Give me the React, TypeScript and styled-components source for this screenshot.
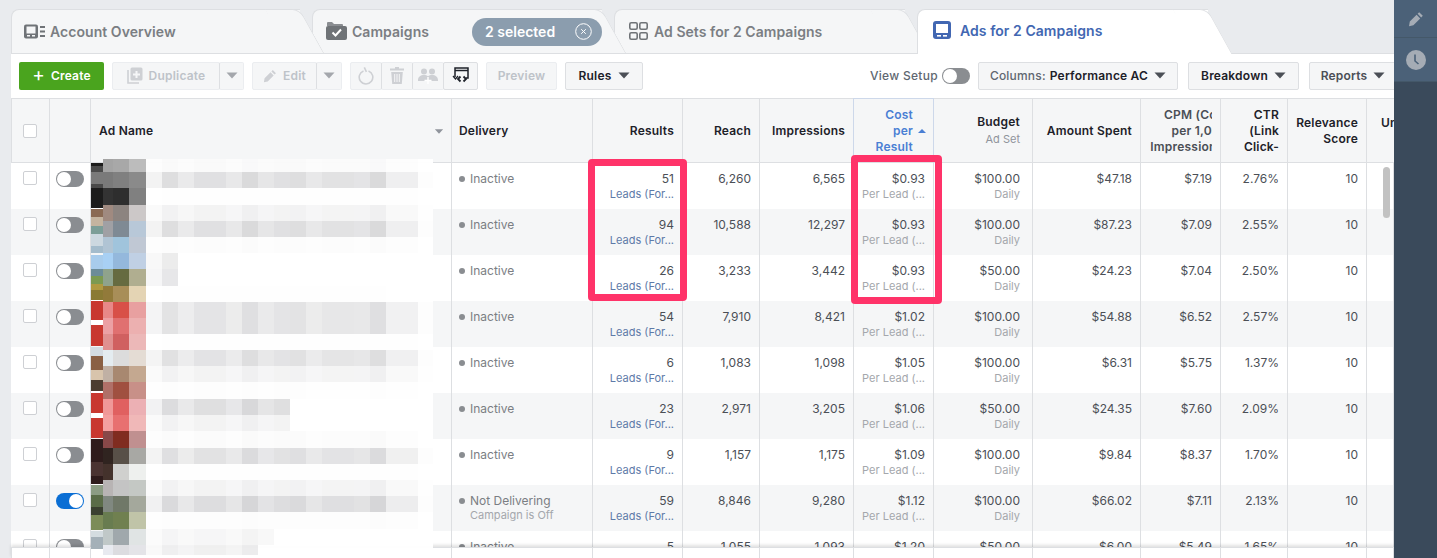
import React from "react";
import styled, { createGlobalStyle } from "styled-components";

const Global = createGlobalStyle`
  html, body { margin: 0; padding: 0; height: 558px; overflow: hidden; }
  body { font-family: Inter, "Liberation Sans", sans-serif; background: #e9ebee; }
  * { box-sizing: border-box; }
`;

const COLS = [39, 41, 361, 141, 90, 77, 94, 80, 99, 108, 80, 67, 79, 27];
const TEMPLATE = COLS.map((c) => `${c}px`).join(" ");

interface IAd {
  results: string;
  reach: string;
  impressions: string;
  cost: string;
  budget: string;
  spent: string;
  cpm: string;
  ctr: string;
  status?: string;
  on?: boolean;
}

const ADS: IAd[] = [
  { results: "51", reach: "6,260", impressions: "6,565", cost: "$0.93", budget: "$100.00", spent: "$47.18", cpm: "$7.19", ctr: "2.76%" },
  { results: "94", reach: "10,588", impressions: "12,297", cost: "$0.93", budget: "$100.00", spent: "$87.23", cpm: "$7.09", ctr: "2.55%" },
  { results: "26", reach: "3,233", impressions: "3,442", cost: "$0.93", budget: "$50.00", spent: "$24.23", cpm: "$7.04", ctr: "2.50%" },
  { results: "54", reach: "7,910", impressions: "8,421", cost: "$1.02", budget: "$100.00", spent: "$54.88", cpm: "$6.52", ctr: "2.57%" },
  { results: "6", reach: "1,083", impressions: "1,098", cost: "$1.05", budget: "$100.00", spent: "$6.31", cpm: "$5.75", ctr: "1.37%" },
  { results: "23", reach: "2,971", impressions: "3,205", cost: "$1.06", budget: "$50.00", spent: "$24.35", cpm: "$7.60", ctr: "2.09%" },
  { results: "9", reach: "1,157", impressions: "1,175", cost: "$1.09", budget: "$100.00", spent: "$9.84", cpm: "$8.37", ctr: "1.70%" },
  { results: "59", reach: "8,846", impressions: "9,280", cost: "$1.12", budget: "$100.00", spent: "$66.02", cpm: "$7.11", ctr: "2.13%", status: "Campaign is Off", on: true },
  { results: "5", reach: "1,055", impressions: "1,093", cost: "$1.20", budget: "$50.00", spent: "$6.00", cpm: "$5.49", ctr: "1.65%" },
];

// the blurred thumbnails and ad names, in page pixels measured from x=91 / y=159
const BLUR = [0.06, 0.16, 0.1, 0.15, 0.15, 0.11, 0.18, 0.12, 0.15, 0.16, 0.11, 0.14, 0.14, 0.13, 0.18, 0.08, 0.08, 0.01];
const MOSAIC: [number, number, string, string, string, number, number][] = [
  [159, 13, "#a4a4a4", "#a8a8a8", "#bcbcbc", 0.15, 18],
  [172, 16, "#7a7a7a", "#808080", "#8a8a8a", 1, 18],
  [188, 17, "#333333", "#2e2e2e", "#808080", 0.03, 18],
  [205, 16, "#a08a80", "#8c8480", "#ccc8c8", 0.4, 18],
  [221, 16, "#a0a0a4", "#7f8a94", "#b8c8d8", 1, 18],
  [237, 16, "#b0c4d4", "#a0c4dc", "#c0c8d4", 0.1, 18],
  [253, 16, "#a8d0f4", "#94b8dc", "#c0d0e4", 0.6, 2],
  [269, 17, "#8fa38c", "#666b40", "#b0ae90", 0.7, 2],
  [286, 16, "#927a3a", "#a88e58", "#e4d4b4", 0.02, 18],
  [302, 16, "#e88888", "#d85048", "#e8a0a0", 0.85, 18],
  [318, 16, "#eca0a4", "#e07070", "#ecb0b0", 0.85, 18],
  [334, 16, "#e09090", "#d06060", "#ecb8b8", 0.03, 18],
  [350, 16, "#e4ecf0", "#dcdcdc", "#e4dcd4", 0.9, 18],
  [366, 16, "#c0b0a4", "#a88870", "#c4a890", 0.4, 18],
  [382, 17, "#b07068", "#a05040", "#c89088", 0.04, 18],
  [399, 16, "#f09898", "#e06060", "#ecb0b4", 1.05, 9],
  [415, 16, "#f4a0a0", "#e87070", "#f0b8b8", 0.4, 9],
  [431, 17, "#884848", "#802c20", "#c09090", 0.12, 18],
  [448, 16, "#302420", "#585048", "#a8a8a4", 0.95, 18],
  [464, 16, "#44322c", "#d0d0ce", "#eef0ee", 0.03, 18],
  [480, 16, "#b8b4b4", "#c4c4c4", "#c4c8c4", 0.4, 18],
  [496, 16, "#808880", "#707868", "#a4a89c", 1.1, 18],
  [512, 17, "#687c50", "#708050", "#c0c4a8", 0.08, 18],
  [529, 16, "#c0c8c8", "#a0a8ac", "#e0e4e4", 0.3, 8],
  [545, 10, "#e8eaf0", "#dcdce0", "#e4e4e8", 0.5, 7],
];

const THUMBS: [number, number, string][] = [
  [163, 45, "#1c1c1c"], [166, 22, "#4a4a4a"], [172, 12, "#7a7a7a"],
  [209, 8, "#8a6a54"], [217, 9, "#c4b4a0"], [226, 8, "#7c9e98"], [234, 12, "#ccd8e0"], [246, 7, "#a4bccc"],
  [255, 14, "#a8ccec"], [269, 7, "#6c8c98"], [276, 8, "#7c9a50"], [284, 6, "#b09a40"], [290, 10, "#8a7a34"],
  [301, 19, "#c83830"], [320, 5, "#ffffff"], [325, 21, "#c83830"],
  [347, 9, "#d4dce2"], [356, 14, "#8a6044"], [370, 10, "#d8c4ac"], [380, 11, "#4c3c30"],
  [393, 20, "#c83830"], [413, 5, "#ffffff"], [418, 20, "#c83830"],
  [439, 45, "#2e1c1c"], [462, 14, "#4a3432"],
  [485, 10, "#8c9c84"], [495, 12, "#5a6c48"], [507, 8, "#3a4030"], [515, 15, "#7c8c58"],
  [531, 6, "#d4dce0"], [537, 12, "#a4b0b8"],
];

function Mosaic() {
  return (
    <MosaicSvg viewBox="91 159 342 396" aria-hidden="true">
      {THUMBS.map(([y, h, c], i) => (
        <rect key={i} x={91} y={y} width={12} height={h} fill={c} />
      ))}
      {MOSAIC.map(([y, h, a, b, c, weight, len]) => (
        <g key={y}>
          <rect x={146} y={y} width={287} height={h} fill="#fff" fillOpacity={0.96} />
          <rect x={103} y={y} width={10} height={h} fill={a} />
          <rect x={113} y={y} width={16} height={h} fill={b} />
          <rect x={129} y={y} width={17} height={h} fill={c} />
          {BLUR.slice(0, len).map((o, i) => (
            <rect key={i} x={146 + i * 16} y={y} width={16} height={h} fill="#30303a" fillOpacity={o * weight} />
          ))}
        </g>
      ))}
    </MosaicSvg>
  );
}

const AccountIcon = () => (
  <svg width="21" height="15" viewBox="0 0 21 15">
    <rect width="14" height="14" y="0.5" rx="2" fill="#6f7377" />
    <rect x="2.5" y="2.5" width="9" height="7" fill="#f5f6f7" />
    <rect x="3" y="11" width="3" height="1.5" fill="#f5f6f7" />
    <rect x="8" y="11" width="3" height="1.5" fill="#f5f6f7" />
    <path d="M16 2h5v2h-5zM16 6.5h5v2h-5zM16 11h5v2h-5z" fill="#6f7377" />
  </svg>
);

const CampaignIcon = () => (
  <svg width="21" height="18" viewBox="0 0 21 18">
    <path d="M2 0h4l2 2h8a1 1 0 0 1 1 1v1H1V1a1 1 0 0 1 1-1z" fill="#8a8d91" />
    <rect y="4" width="21" height="14" rx="2" fill="#6f7377" />
    <path d="M6.5 10.5l3 3 5.5-6" stroke="#fff" strokeWidth="2" fill="none" />
  </svg>
);

const AdSetsIcon = () => (
  <svg width="19" height="18" viewBox="0 0 19 18" fill="none" stroke="#6f7377" strokeWidth="1.6">
    <rect x="0.8" y="0.8" width="7.4" height="6.4" rx="1.5" />
    <rect x="10.8" y="0.8" width="7.4" height="6.4" rx="1.5" />
    <rect x="0.8" y="10.8" width="7.4" height="6.4" rx="1.5" />
    <rect x="10.8" y="10.8" width="7.4" height="6.4" rx="1.5" />
  </svg>
);

const AdsIcon = () => (
  <svg width="18" height="18" viewBox="0 0 18 18">
    <rect width="18" height="18" rx="3" fill="#4267b2" />
    <rect x="3" y="3" width="12" height="9" fill="#fff" />
    <rect x="4" y="14" width="4" height="1.6" fill="#fff" />
    <rect x="10" y="14" width="4" height="1.6" fill="#fff" />
  </svg>
);

const CloseIcon = () => (
  <svg width="17" height="17" viewBox="0 0 17 17" fill="none" stroke="#fff">
    <circle cx="8.5" cy="8.5" r="7.8" />
    <path d="M6.2 6.2l4.6 4.6M10.8 6.2l-4.6 4.6" />
  </svg>
);

const Caret = ({ color = "#4b4f56" }: { color?: string }) => (
  <svg width="12" height="7" viewBox="0 0 12 7">
    <path d="M0.5 0.5h11L6 6.5z" fill={color} />
  </svg>
);

const PencilIcon = ({ color, size }: { color: string; size: number }) => (
  <svg width={size} height={size} viewBox="0 0 16 16">
    <path d="M11.2 1.2l3.6 3.6-1.6 1.6-3.6-3.6zM8.6 3.8l3.6 3.6-6.8 6.8-4.4 1 .8-4.6z" fill={color} />
  </svg>
);

const DuplicateIcon = () => (
  <svg width="16" height="17" viewBox="0 0 16 17">
    <path d="M1 3v13h11" fill="none" stroke="#ced0d4" strokeWidth="1.6" />
    <rect x="3.5" y="0.5" width="12" height="13" rx="1.5" fill="#ced0d4" />
    <path d="M8.5 4h2v2.5H13v2h-2.500V11h-2V8.500H6v-2h2.500z" fill="#f5f6f7" />
  </svg>
);

const RefreshIcon = () => (
  <svg width="16" height="18" viewBox="0 0 16 18" fill="none" stroke="#ced0d4" strokeWidth="1.6">
    <path d="M5.500 3.900a6.800 6.800 0 1 0 5 0" />
    <path d="M8 0v5" transform="rotate(-25 8 4)" />
  </svg>
);

const TrashIcon = () => (
  <svg width="14" height="17" viewBox="0 0 14 17" fill="#ced0d4">
    <path d="M5 0h4v1.500h5V3.500H0V1.500h5z" />
    <path d="M1.200 5h11.600l-1 12H2.200zM4.200 7v8h1V7zM6.500 7v8h1V7zM8.800 7v8h1V7z" fillRule="evenodd" />
  </svg>
);

const UsersIcon = () => (
  <svg width="20" height="16" viewBox="0 0 20 16" fill="#ced0d4">
    <circle cx="6" cy="3.500" r="3" />
    <circle cx="14" cy="3.500" r="3" />
    <path d="M0 12c0-3 2.500-5 6-5 1.500 0 3 .4 4 1.200C11 7.400 12.500 7 14 7c3.500 0 6 2 6 5v1H0z" />
    <path d="M10 9v7M6.500 12.500h7" stroke="#fff" strokeWidth="1.400" />
  </svg>
);

const SwapIcon = () => (
  <svg width="17" height="17" viewBox="0 0 17 17" fill="none" stroke="#1d2129" strokeWidth="1.500">
    <path d="M3 10V1h13v10h-2" />
    <path d="M1 9l2.500 3L6 9" strokeWidth="1.200" />
    <path d="M8.500 9.500L6 12l2.500 2.500M11.500 9.500L14 12l-2.500 2.500" strokeWidth="1.800" />
    <path d="M3 3.500h13" strokeWidth="1.500" />
  </svg>
);

const ClockIcon = () => (
  <svg width="20" height="20" viewBox="0 0 20 20">
    <circle cx="10" cy="10" r="10" fill="#a5acb5" />
    <path d="M9 4.500v6.500l3.500 3" fill="none" stroke="#4b6178" strokeWidth="1.600" />
  </svg>
);

export default function App() {
  return (
    <Page>
      <Global />
      <Main>
        <Tabs>
          <Tab $w={289} $z={4} $pad={12} $gap={5}>
            <AccountIcon />
            <TabLabel>Account Overview</TabLabel>
          </Tab>
          <Tab $w={290} $z={3} $pad={13} $gap={5}>
            <CampaignIcon />
            <TabLabel>Campaigns</TabLabel>
            <Pill>
              2 selected
              <CloseIcon />
            </Pill>
          </Tab>
          <Tab $w={291} $z={2} $pad={14} $gap={6}>
            <AdSetsIcon />
            <TabLabel>Ad Sets for 2 Campaigns</TabLabel>
          </Tab>
          <Tab $w={291} $z={5} $pad={15} $gap={9} $active>
            <AdsIcon />
            <TabLabel $active>Ads for 2 Campaigns</TabLabel>
          </Tab>
        </Tabs>

        <Toolbar>
          <CreateButton>
            <Plus>+</Plus> Create
          </CreateButton>
          <ButtonPair>
            <ToolButton $w={108} $off>
              <DuplicateIcon /> Duplicate
            </ToolButton>
            <ToolButton $w={25} $off $joined>
              <Caret color="#a4a7ac" />
            </ToolButton>
          </ButtonPair>
          <ButtonPair>
            <ToolButton $w={65} $off>
              <PencilIcon color="#ced0d4" size={14} /> Edit
            </ToolButton>
            <ToolButton $w={26} $off $joined>
              <Caret color="#a4a7ac" />
            </ToolButton>
          </ButtonPair>
          <ButtonPair>
            <ToolButton $w={32} $off>
              <RefreshIcon />
            </ToolButton>
            <ToolButton $w={32} $off $joined>
              <TrashIcon />
            </ToolButton>
            <ToolButton $w={32} $off $joined>
              <UsersIcon />
            </ToolButton>
            <ToolButton $w={35} $joined>
              <SwapIcon />
            </ToolButton>
          </ButtonPair>
          <ToolButton $w={71} $off>
            Preview
          </ToolButton>
          <ToolButton $w={78}>
            Rules <Caret />
          </ToolButton>
          <RightTools>
            <SetupLabel>View Setup</SetupLabel>
            <Toggle />
            <ToolButton $w={200}>
              <Muted>Columns:</Muted> Performance AC <Caret />
            </ToolButton>
            <ToolButton $w={111}>
              Breakdown <Caret />
            </ToolButton>
            <ReportsButton $w={88}>
              Reports <Caret />
            </ReportsButton>
          </RightTools>
        </Toolbar>

        <TableWrap>
          <HeadRow>
            <HeadCell $center>
              <Check />
            </HeadCell>
            <HeadCell />
            <HeadCell $left>
              Ad Name
              <NameCaret>
                <Caret color="#90949c" />
              </NameCaret>
            </HeadCell>
            <DeliveryHead $left>Delivery</DeliveryHead>
            <HeadCell>Results</HeadCell>
            <HeadCell>Reach</HeadCell>
            <HeadCell>Impressions</HeadCell>
            <SortedCell>
              <span>Cost</span>
              <span>
                per
                <SortUp />
              </span>
              <span>Result</span>
            </SortedCell>
            <HeadCell $wide>
              Budget
              <HeadSub>Ad Set</HeadSub>
            </HeadCell>
            <HeadCell>Amount Spent</HeadCell>
            <HeadCell>
              <ClipLines>
                <span>CPM (Cost</span>
                <span>per 1,000</span>
                <span>Impressions)</span>
              </ClipLines>
            </HeadCell>
            <HeadCell>
              CTR
              <br />
              (Link
              <br />
              Click-
            </HeadCell>
            <HeadCell>
              Relevance
              <br />
              Score
            </HeadCell>
            <ClippedHead $left>Unique</ClippedHead>
          </HeadRow>

          <Body>
            {ADS.map((ad, i) => (
              <Row key={i} $alt={i % 2 === 1}>
                <Cell $center>
                  <Check />
                </Cell>
                <Cell $center>
                  <Toggle $on={ad.on} />
                </Cell>
                <Cell />
                <Cell $left>
                  <Status>
                    <Dot />
                    {ad.status ? "Not Delivering" : "Inactive"}
                  </Status>
                  {ad.status && <StatusSub>{ad.status}</StatusSub>}
                </Cell>
                <Cell>
                  {ad.results}
                  <LeadLink>Leads (For...</LeadLink>
                </Cell>
                <Cell>{ad.reach}</Cell>
                <Cell>{ad.impressions}</Cell>
                <Cell>
                  {ad.cost}
                  <Sub>Per Lead (...</Sub>
                </Cell>
                <Cell $wide>
                  {ad.budget}
                  <Sub>Daily</Sub>
                </Cell>
                <Cell>{ad.spent}</Cell>
                <Cell>{ad.cpm}</Cell>
                <Cell>{ad.ctr}</Cell>
                <Cell>10</Cell>
                <Cell />
              </Row>
            ))}
          </Body>

          <Foot>
            {COLS.map((c, i) => (
              <FootCell key={i} />
            ))}
          </Foot>

          <Mosaic />
          <Scrollbar />
          <ResultsHighlight />
          <CostHighlight />
        </TableWrap>
      </Main>

      <Sidebar>
        <SideItem $h={38}>
          <PencilIcon color="#a5acb5" size={16} />
        </SideItem>
        <SideItem $h={44}>
          <ClockIcon />
        </SideItem>
      </Sidebar>
    </Page>
  );
}

const Page = styled.div`
  display: flex;
  width: 1437px;
  height: 558px;
  overflow: hidden;
`;

const Main = styled.div`
  width: 1394px;
  flex-shrink: 0;
  padding-left: 11px;
  overflow: hidden;
`;

const Tabs = styled.div`
  display: flex;
  height: 54px;
  padding-top: 9px;
  box-shadow: inset 0 -1px 0 #dddfe2;
`;

const Tab = styled.div<{ $w: number; $z: number; $pad: number; $gap: number; $active?: boolean }>`
  position: relative;
  z-index: ${(p) => p.$z};
  width: ${(p) => p.$w}px;
  margin-right: 12px;
  height: ${(p) => (p.$active ? 45 : 44)}px;
  display: flex;
  align-items: center;
  gap: ${(p) => p.$gap}px;
  padding: ${(p) => (p.$active ? `0 0 4px ${p.$pad}px` : `0 0 1px ${p.$pad}px`)};
  background: ${(p) => (p.$active ? "#fff" : "#f5f6f7")};
  border-top: 1px solid #dddfe2;
  border-left: 1px solid #dddfe2;
  border-radius: 8px 0 0 0;

  &::after {
    content: "";
    position: absolute;
    top: -1px;
    bottom: 0;
    right: -12px;
    width: 34px;
    background: ${(p) => (p.$active ? "#fff" : "#f5f6f7")};
    border-top: 1px solid #dddfe2;
    border-right: 1px solid #dddfe2;
    border-radius: 0 8px 0 0;
    transform: skewX(29deg);
    z-index: -1;
  }
`;

const TabLabel = styled.span<{ $active?: boolean }>`
  font-size: 14px;
  font-weight: 600;
  letter-spacing: 0.05px;
  color: ${(p) => (p.$active ? "#4267b2" : "#7b7e83")};
  white-space: nowrap;
`;

const Pill = styled.div`
  position: absolute;
  left: 159px;
  top: 8px;
  width: 130px;
  height: 28px;
  padding: 0 10px 1px 13px;
  display: flex;
  align-items: center;
  justify-content: space-between;
  background: #8b9dae;
  border-radius: 14px;
  color: #fff;
  font-size: 14px;
  font-weight: 600;
  z-index: 2;
`;

const Toolbar = styled.div`
  display: flex;
  align-items: center;
  gap: 8px;
  height: 44px;
  padding-left: 8px;
  background: #fff;
  position: relative;
  z-index: 6;
`;

const ToolButton = styled.div<{ $w: number; $off?: boolean; $joined?: boolean }>`
  width: ${(p) => p.$w}px;
  height: 28px;
  flex-shrink: 0;
  display: flex;
  align-items: center;
  justify-content: center;
  gap: 6px;
  padding-bottom: 1px;
  font-size: 12px;
  font-weight: 600;
  letter-spacing: 0.2px;
  white-space: nowrap;
  color: ${(p) => (p.$off ? "#bec3c9" : "#1d2129")};
  background: #f5f6f7;
  border: 1px solid ${(p) => (p.$off ? "#ebedf0" : "#dddfe2")};
  border-radius: 2px;
  ${(p) => p.$joined && "border-left-color: #dddfe2; margin-left: -1px;"}
`;

const ReportsButton = styled(ToolButton)`
  color: #4b4f56;
  margin-right: -3px;
`;

const CreateButton = styled.div`
  width: 85px;
  height: 28px;
  display: flex;
  align-items: center;
  justify-content: center;
  gap: 6px;
  padding-bottom: 1px;
  background: #4aa41e;
  border-radius: 2px;
  color: #fff;
  font-size: 12px;
  font-weight: 600;
  letter-spacing: 0.2px;
`;

const Plus = styled.span`
  font-size: 19px;
  font-weight: 400;
  line-height: 1;
  margin-top: -2px;
`;

const ButtonPair = styled.div`
  display: flex;
`;

const RightTools = styled.div`
  display: flex;
  align-items: center;
  margin-left: auto;
`;

const SetupLabel = styled.span`
  font-size: 12px;
  font-weight: 500;
  letter-spacing: 0.3px;
  color: #606770;
  margin-right: 4px;
  padding-bottom: 1px;
`;

const Muted = styled.span`
  font-weight: 500;
  color: #606770;
  margin-right: -2px;
`;

const Toggle = styled.div<{ $on?: boolean }>`
  position: relative;
  width: 28px;
  height: 16px;
  border-radius: 8px;
  background: ${(p) => (p.$on ? "#0a6ed4" : "#8a8d91")};

  &::after {
    content: "";
    position: absolute;
    top: 1px;
    ${(p) => (p.$on ? "right: 1px;" : "left: 1px;")}
    width: 14px;
    height: 14px;
    border-radius: 50%;
    background: #fff;
  }

  ${SetupLabel} + & {
    margin-right: 8px;
  }
  & + ${ToolButton} {
    margin-right: 10px;
  }
  & + ${ToolButton} + ${ToolButton} {
    margin-right: 10px;
  }
`;

const TableWrap = styled.div`
  position: relative;
  height: 460px;
  background: #fff;
`;

const HeadRow = styled.div`
  display: grid;
  grid-template-columns: ${TEMPLATE};
  height: 65px;
  background: #f5f6f7;
  border-top: 1px solid #dddfe2;
  border-bottom: 1px solid #dddfe2;
  box-shadow: inset 1px 0 0 #dddfe2;
`;

const HeadCell = styled.div<{ $left?: boolean; $center?: boolean; $wide?: boolean }>`
  position: relative;
  display: flex;
  flex-direction: column;
  justify-content: center;
  align-items: ${(p) => (p.$center ? "center" : p.$left ? "flex-start" : "flex-end")};
  text-align: ${(p) => (p.$left ? "left" : "right")};
  padding: ${(p) => (p.$center ? "0" : p.$wide ? "0 12px 0 8px" : "0 8px")};
  border-right: 1px solid #dddfe2;
  font-size: 12px;
  font-weight: 600;
  letter-spacing: 0.2px;
  line-height: 16px;
  color: #1d2129;
  white-space: nowrap;
  overflow: hidden;
`;

const DeliveryHead = styled(HeadCell)`
  padding-left: 7px;
`;

const ClippedHead = styled(HeadCell)`
  padding: 0 0 16px 14px;
  border-right: none;
`;

const SortedCell = styled(HeadCell)`
  padding-right: 20px;
  color: #4a7fd4;
  border: 1px solid #cdd8ea;
  border-bottom: none;
  margin: -1px 0 -1px -1px;
  overflow: visible;

  span {
    position: relative;
    display: block;
  }
`;

const SortUp = styled.i`
  position: absolute;
  right: -13px;
  top: 6px;
  border: 4px solid transparent;
  border-top: none;
  border-bottom: 4px solid #4a7fd4;
`;

const HeadSub = styled.div`
  margin-top: 1px;
  font-size: 11px;
  font-weight: 400;
  letter-spacing: 0;
  color: #90949c;
`;

const NameCaret = styled.div`
  position: absolute;
  right: 6px;
  top: 29px;
  display: flex;
  transform: scale(0.75);
`;

const ClipLines = styled.div`
  width: 62px;
  overflow: hidden;
  display: flex;
  flex-direction: column;
  align-items: flex-end;
  color: #4b4f56;

  span {
    display: block;
    margin-right: -16px;
  }
`;

const Check = styled.div`
  width: 14px;
  height: 14px;
  background: #fff;
  border: 1px solid #ced0d4;
  border-radius: 2px;
`;

const Body = styled.div`
  height: 384px;
  overflow: hidden;
  box-shadow: inset 1px 0 0 #dddfe2;
`;

const Row = styled.div<{ $alt: boolean }>`
  display: grid;
  grid-template-columns: ${TEMPLATE};
  height: 46px;
  background: ${(p) => (p.$alt ? "#f5f6f7" : "#fff")};
`;

const Cell = styled.div<{ $left?: boolean; $center?: boolean; $wide?: boolean }>`
  padding: ${(p) => (p.$center ? "8px 0 0" : p.$left ? "8px 8px 0 7px" : p.$wide ? "8px 12px 0 8px" : "8px 8px 0")};
  display: flex;
  flex-direction: column;
  align-items: ${(p) => (p.$center ? "center" : p.$left ? "flex-start" : "flex-end")};
  border-right: 1px solid #dddfe2;
  font-size: 12px;
  line-height: 15px;
  color: #4b4f56;
  white-space: nowrap;
  overflow: hidden;
`;

const Status = styled.div`
  display: flex;
  align-items: center;
  gap: 5px;
  color: #7b7e83;
`;

const Dot = styled.i`
  width: 6px;
  height: 6px;
  border-radius: 50%;
  background: #8a8d91;
`;

const StatusSub = styled.div`
  padding-left: 11px;
  font-size: 11px;
  color: #a4a7ac;
`;

const Sub = styled.div`
  margin-top: 1px;
  font-size: 11px;
  color: #a4a7ac;
`;

const LeadLink = styled(Sub)`
  color: #5e7aa8;
`;

const Foot = styled.div`
  display: grid;
  grid-template-columns: ${TEMPLATE};
  height: 11px;
  background: #fff;
  position: relative;
  box-shadow: 0 -2px 3px rgba(0, 0, 0, 0.12), inset 1px 0 0 #dddfe2;
  border-top: 1px solid #dddfe2;
`;

const FootCell = styled.div`
  border-right: 1px solid #dddfe2;
`;

const MosaicSvg = styled.svg`
  position: absolute;
  left: 80px;
  top: 61px;
  width: 342px;
  height: 396px;
`;

const Scrollbar = styled.div`
  position: absolute;
  left: 1372px;
  top: 69px;
  width: 7px;
  height: 51px;
  border-radius: 4px;
  background: #c2c2c2;
`;

const Highlight = styled.div`
  position: absolute;
  border: 7px solid #ff3369;
  border-radius: 4px;
`;

const ResultsHighlight = styled(Highlight)`
  left: 577px;
  top: 61px;
  width: 99px;
  height: 142px;
`;

const CostHighlight = styled(Highlight)`
  left: 840px;
  top: 57px;
  width: 91px;
  height: 149px;
`;

const Sidebar = styled.div`
  width: 43px;
  height: 558px;
  background: #3a4a5b;
`;

const SideItem = styled.div<{ $h: number }>`
  height: ${(p) => p.$h}px;
  display: flex;
  align-items: center;
  justify-content: center;
  background: #4b6178;
  border-bottom: 1px solid #445869;
`;
